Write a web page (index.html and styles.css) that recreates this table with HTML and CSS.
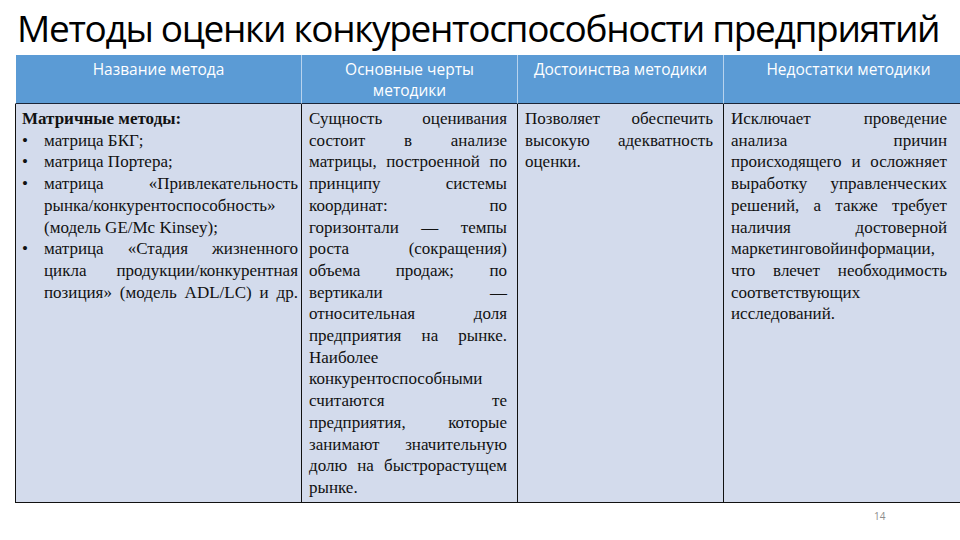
FILE: index.html
```html
<!DOCTYPE html>
<html lang="ru">
<head>
<meta charset="utf-8">
<title>Методы оценки конкурентоспособности предприятий</title>
<link rel="stylesheet" href="styles.css">
</head>
<body>
<div class="slide">
  <h1 class="title">Методы оценки конкурентоспособности предприятий</h1>
  <div class="grid">
    <div class="th">Название метода</div>
    <div class="th">Основные черты<br>методики</div>
    <div class="th">Достоинства методики</div>
    <div class="th">Недостатки методики</div>

    <div class="td c1">
      <div class="ln b">Матричные методы:</div>
      <div class="item"><span class="dot">•</span><div><div class="ln">матрица БКГ;</div></div></div>
      <div class="item"><span class="dot">•</span><div><div class="ln">матрица Портера;</div></div></div>
      <div class="item"><span class="dot">•</span><div>
        <div class="ln j">матрица «Привлекательность</div>
        <div class="ln j">рынка/конкурентоспособность»</div>
        <div class="ln">(модель GE/Mc Kinsey);</div>
      </div></div>
      <div class="item"><span class="dot">•</span><div>
        <div class="ln j">матрица «Стадия жизненного</div>
        <div class="ln j">цикла продукции/конкурентная</div>
        <div class="ln j">позиция» (модель ADL/LC) и др.</div>
      </div></div>
    </div>

    <div class="td c2">
      <div class="ln j">Сущность оценивания</div>
      <div class="ln j">состоит в анализе</div>
      <div class="ln j">матрицы, построенной по</div>
      <div class="ln j">принципу системы</div>
      <div class="ln j">координат: по</div>
      <div class="ln j">горизонтали — темпы</div>
      <div class="ln j">роста (сокращения)</div>
      <div class="ln j">объема продаж; по</div>
      <div class="ln j">вертикали —</div>
      <div class="ln j">относительная доля</div>
      <div class="ln j">предприятия на рынке.</div>
      <div class="ln">Наиболее</div>
      <div class="ln">конкурентоспособными</div>
      <div class="ln j">считаются те</div>
      <div class="ln j">предприятия, которые</div>
      <div class="ln j">занимают значительную</div>
      <div class="ln j">долю на быстрорастущем</div>
      <div class="ln">рынке.</div>
    </div>

    <div class="td c3">
      <div class="ln j">Позволяет обеспечить</div>
      <div class="ln j">высокую адекватность</div>
      <div class="ln">оценки.</div>
    </div>

    <div class="td c4">
      <div class="ln j">Исключает проведение</div>
      <div class="ln j">анализа причин</div>
      <div class="ln j">происходящего и осложняет</div>
      <div class="ln j">выработку управленческих</div>
      <div class="ln j">решений, а также требует</div>
      <div class="ln j">наличия достоверной</div>
      <div class="ln">маркетинговойинформации,</div>
      <div class="ln j">что влечет необходимость</div>
      <div class="ln">соответствующих</div>
      <div class="ln">исследований.</div>
    </div>
  </div>
  <div class="footer"><span class="page">14</span></div>
</div>
</body>
</html>
```

FILE: styles.css
```css
html, body {
  margin: 0;
  padding: 0;
  background: #fff;
}

.slide {
  width: 960px;
  height: 540px;
  overflow: hidden;
  background: #fff;
}

.title {
  margin: 0;
  padding: 3px 0 0 17px;
  height: 55px;
  box-sizing: border-box;
  font-family: "Open Sans", "Noto Sans", sans-serif;
  font-weight: 500;
  font-size: 37px;
  line-height: 50px;
  letter-spacing: -1.32px;
  color: #000;
  white-space: nowrap;
}

.grid {
  display: grid;
  grid-template-columns: 286px 216px 206px 250px;
  margin-left: 15px;
  width: 958px;
}

.th {
  background: #5b9bd5;
  color: #fff;
  height: 49px;
  box-sizing: border-box;
  padding-top: 4px;
  font-family: "Open Sans", "Noto Sans", sans-serif;
  font-weight: 500;
  font-size: 15.5px;
  line-height: 21px;
  text-align: center;
  border-left: 1px solid #b8d3ee;
  border-bottom: 1px solid #1b2538;
}

.th:first-child {
  border-left: 1px solid #fff;
}

.td {
  background: #d3dbec;
  border-left: 1px solid #111;
  border-bottom: 1px solid #111;
  box-sizing: border-box;
  padding: 4px 10px 3px 7px;
  font-family: "Liberation Serif", "Times New Roman", serif;
  font-size: 17px;
  line-height: 21.7px;
  color: #111;
}

.c1 {
  padding-left: 6px;
  padding-right: 3px;
}

.c4 {
  padding-right: 26px;
}

.ln {
  display: block;
}

.j {
  text-align: justify;
  text-align-last: justify;
}

.b {
  font-weight: bold;
}

.item {
  display: grid;
  grid-template-columns: 22px 1fr;
}

.dot {
  display: block;
}

.footer {
  display: flex;
  justify-content: flex-start;
  padding: 6px 0 0 874px;
}

.page {
  font-family: "Open Sans", "Noto Sans", sans-serif;
  font-size: 10px;
  color: #8c8c8c;
}
```
